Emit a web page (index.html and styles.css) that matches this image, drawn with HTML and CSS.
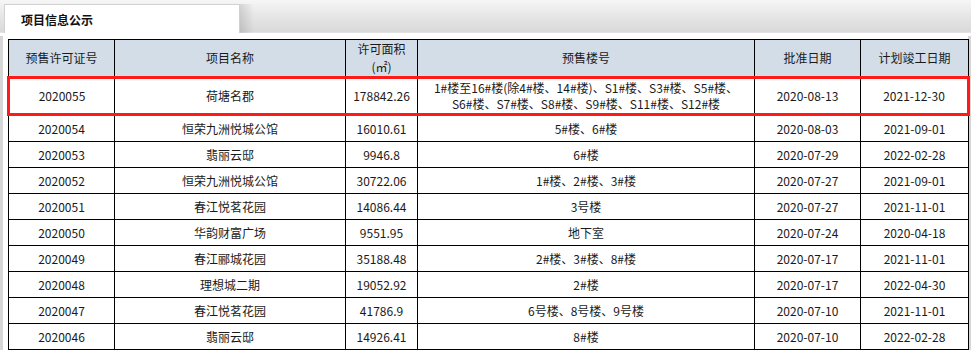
FILE: index.html
```html
<!DOCTYPE html>
<html lang="zh">
<head>
<meta charset="utf-8">
<title>项目信息公示</title>
<link rel="stylesheet" href="styles.css">
</head>
<body>
<div class="topbar">
  <div class="tab">项目信息公示</div>
  <div class="tab-shadow"></div>
</div>
<div class="content">
  <table class="grid">
    <colgroup>
      <col class="c1"><col class="c2"><col class="c3"><col class="c4"><col class="c5"><col class="c6">
    </colgroup>
    <thead>
      <tr>
        <th>预售许可证号</th>
        <th>项目名称</th>
        <th>许可面积<br>(㎡)</th>
        <th>预售楼号</th>
        <th>批准日期</th>
        <th>计划竣工日期</th>
      </tr>
    </thead>
    <tbody>
      <tr class="hl">
        <td>2020055</td><td>荷塘名郡</td><td>178842.26</td>
        <td class="multi">1#楼至16#楼(除4#楼、14#楼)、S1#楼、S3#楼、S5#楼、<br>S6#楼、S7#楼、S8#楼、S9#楼、S11#楼、S12#楼</td>
        <td>2020-08-13</td><td>2021-12-30</td>
      </tr>
      <tr><td>2020054</td><td>恒荣九洲悦城公馆</td><td>16010.61</td><td>5#楼、6#楼</td><td>2020-08-03</td><td>2021-09-01</td></tr>
      <tr><td>2020053</td><td>翡丽云邸</td><td>9946.8</td><td>6#楼</td><td>2020-07-29</td><td>2022-02-28</td></tr>
      <tr><td>2020052</td><td>恒荣九洲悦城公馆</td><td>30722.06</td><td>1#楼、2#楼、3#楼</td><td>2020-07-27</td><td>2021-09-01</td></tr>
      <tr><td>2020051</td><td>春江悦茗花园</td><td>14086.44</td><td>3号楼</td><td>2020-07-27</td><td>2021-11-01</td></tr>
      <tr><td>2020050</td><td>华韵财富广场</td><td>9551.95</td><td>地下室</td><td>2020-07-24</td><td>2020-04-18</td></tr>
      <tr><td>2020049</td><td>春江郦城花园</td><td>35188.48</td><td>2#楼、3#楼、8#楼</td><td>2020-07-17</td><td>2021-11-01</td></tr>
      <tr><td>2020048</td><td>理想城二期</td><td>19052.92</td><td>2#楼</td><td>2020-07-17</td><td>2022-04-30</td></tr>
      <tr><td>2020047</td><td>春江悦茗花园</td><td>41786.9</td><td>6号楼、8号楼、9号楼</td><td>2020-07-10</td><td>2021-11-01</td></tr>
      <tr><td>2020046</td><td>翡丽云邸</td><td>14926.41</td><td>8#楼</td><td>2020-07-10</td><td>2022-02-28</td></tr>
    </tbody>
  </table>
</div>
</body>
</html>
```

FILE: styles.css
```css
html, body {
  margin: 0;
  padding: 0;
  background: #ffffff;
}
body {
  font-family: "Microsoft YaHei", "Noto Sans CJK SC", "Noto Sans", sans-serif;
  font-size: 12px;
  color: #1a1a1a;
  width: 971px;
  height: 350px;
  overflow: hidden;
}
.topbar {
  height: 33px;
  box-sizing: border-box;
  padding: 4px 0 0 4px;
  display: flex;
  background: linear-gradient(#f6f6f6, #e6e6e6 50%, #d9d9d9);
  border-bottom: 1px solid #e2e2e2;
}
.tab {
  width: 236px;
  height: 29px;
  box-sizing: border-box;
  background: #ffffff;
  border: 1px solid #d2d2d2;
  border-bottom: none;
  padding-left: 16px;
  line-height: 30px;
  font-size: 12px;
  font-weight: bold;
  color: #111;
}
.tab-shadow {
  width: 14px;
  height: 29px;
  background: linear-gradient(90deg, rgba(0,0,0,0.12), rgba(0,0,0,0));
}
.content {
  margin-top: 3px;
  border-left: 3px solid #d6d6d6;
  border-right: 3px solid #d6d6d6;
  padding: 3px 2px 0 4px;
  height: 320px;
}
.grid {
  border-collapse: collapse;
  table-layout: fixed;
  width: 960px;
}
.c1 { width: 106px; }
.c2 { width: 231px; }
.c3 { width: 72px; }
.c4 { width: 337px; }
.c5 { width: 106px; }
.c6 { width: 108px; }
.grid th, .grid td {
  border: 1px solid #000;
  text-align: center;
  padding: 0 2px;
  white-space: nowrap;
}
.grid th {
  background: #d2dde8;
  font-weight: normal;
  height: 35px;
  line-height: 18px;
  color: #1a1a1a;
}
.grid td {
  height: 25px;
  line-height: 16px;
}
.grid tr.hl td {
  height: 34px;
  border-top: 3px solid #ff1a1a;
  border-bottom: 3px solid #ff1a1a;
}
.grid tr.hl td:first-child { border-left: 3px solid #ff1a1a; }
.grid tr.hl td:last-child { border-right: 3px solid #ff1a1a; }
```
